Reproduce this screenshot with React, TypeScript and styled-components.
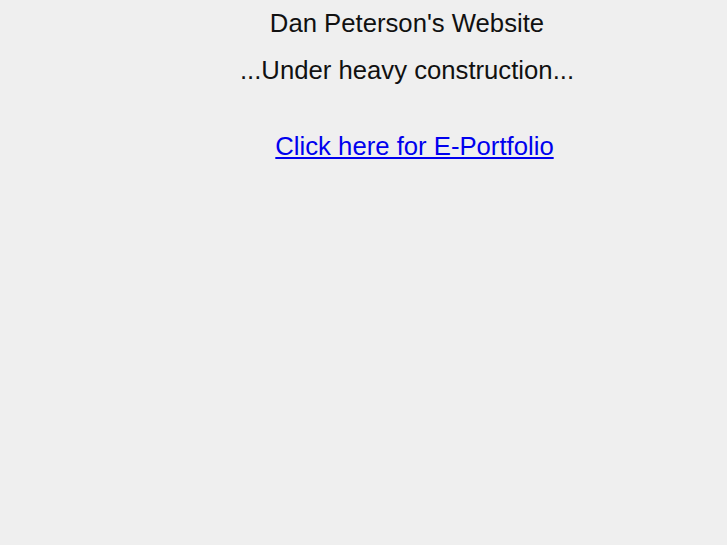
import React from "react";
import styled, { createGlobalStyle } from "styled-components";

const GlobalStyle = createGlobalStyle`
  html, body {
    margin: 0;
    padding: 0;
    background: #efefef;
    font-family: "Liberation Sans", Arial, sans-serif;
  }
`;

const Page = styled.div`
  display: flex;
  flex-direction: column;
  align-items: center;
  padding-left: 87px;
  padding-top: 6px;
  min-height: 545px;
  box-sizing: border-box;
`;

const Title = styled.div`
  font-size: 25.7px;
  line-height: 34px;
  color: #111;
`;

const Subtitle = styled.div`
  font-size: 25.7px;
  line-height: 34px;
  margin-top: 13px;
  color: #111;
`;

const PortfolioLink = styled.a`
  font-size: 25.7px;
  line-height: 34px;
  margin-top: 42px;
  margin-left: 15px;
  color: #0000ee;
  text-decoration: underline;
`;

function App() {
  return (
    <>
      <GlobalStyle />
      <Page>
        <Title>Dan Peterson's Website</Title>
        <Subtitle>...Under heavy construction...</Subtitle>
        <PortfolioLink href="#">Click here for E-Portfolio</PortfolioLink>
      </Page>
    </>
  );
}

export default App;
